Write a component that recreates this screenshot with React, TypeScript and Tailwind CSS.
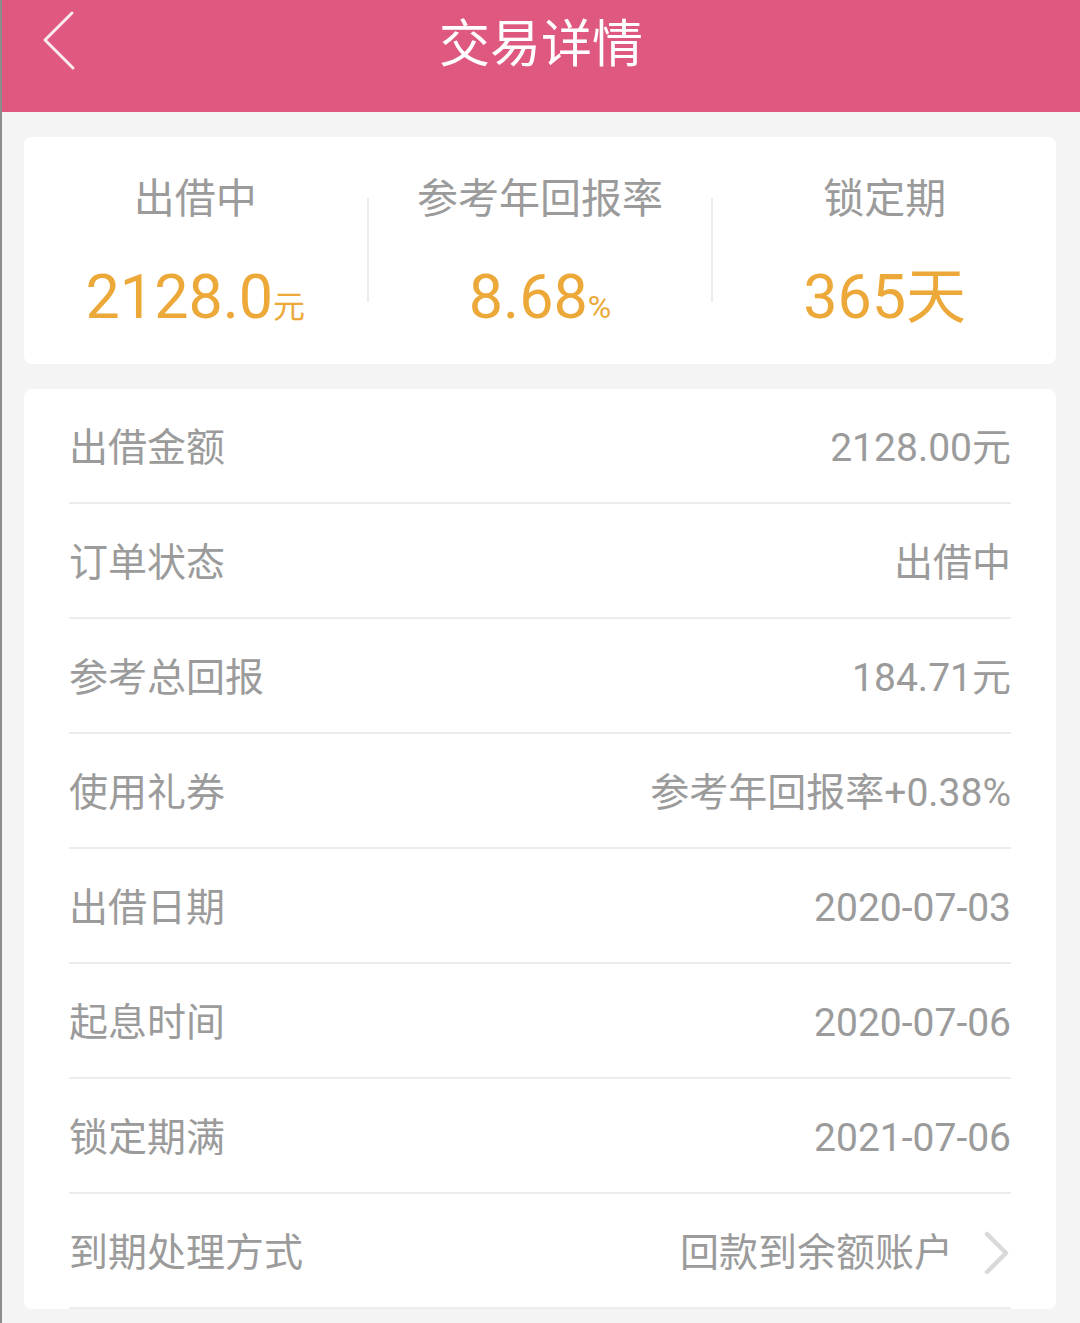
const SANS = "font-['Roboto','Noto_Sans_CJK_SC',sans-serif]";

type Row = { label: string; value: string; link?: boolean };

const ROWS: Row[] = [
  { label: "出借金额", value: "2128.00元" },
  { label: "订单状态", value: "出借中" },
  { label: "参考总回报", value: "184.71元" },
  { label: "使用礼券", value: "参考年回报率+0.38%" },
  { label: "出借日期", value: "2020-07-03" },
  { label: "起息时间", value: "2020-07-06" },
  { label: "锁定期满", value: "2021-07-06" },
  { label: "到期处理方式", value: "回款到余额账户", link: true },
];

function Stat({ label, value, unit, unitBig }: { label: string; value: string; unit: string; unitBig?: boolean }) {
  return (
    <div className="flex flex-1 flex-col items-center pt-[42px]">
      <div className="text-[41px] leading-[41px] text-[#9b9b9b]">{label}</div>
      <div className="mt-[47px] flex items-baseline text-[#eca939]">
        <span className="text-[61px] leading-[61px]">{value}</span>
        <span className={unitBig ? "text-[60px] leading-[61px]" : "text-[32px] leading-[32px]"}>{unit}</span>
      </div>
    </div>
  );
}

export default function App() {
  return (
    <div className={`${SANS} min-h-screen border-l-2 border-[#8c8c8c] bg-[#f4f4f4] pb-[15px]`}>
      {/* header */}
      <div className="relative flex h-[112px] items-start justify-center bg-[#de5880] pt-[14px]">
        <svg className="absolute left-[38px] top-[10px]" width="40" height="62" viewBox="0 0 40 62" fill="none">
          <polyline points="32,3 5,30 33,58" stroke="#fbeaf0" strokeWidth="3" strokeLinecap="round" strokeLinejoin="round" />
        </svg>
        <h1 className="text-[51px] leading-[62px] font-normal text-white">交易详情</h1>
      </div>

      {/* summary card */}
      <div className="ml-[22px] mr-[24px] mt-[25px] flex h-[227px] rounded-[8px] bg-white">
        <Stat label="出借中" value="2128.0" unit="元" />
        <div className="mt-[61px] h-[104px] w-[2px] bg-[#ececec]" />
        <Stat label="参考年回报率" value="8.68" unit="%" />
        <div className="mt-[61px] h-[104px] w-[2px] bg-[#ececec]" />
        <Stat label="锁定期" value="365" unit="天" unitBig />
      </div>

      {/* detail card */}
      <div className="ml-[22px] mr-[24px] mt-[25px] rounded-[8px] bg-white px-[45px]">
        {ROWS.map((r) => (
          <div key={r.label} className="flex h-[115px] items-center justify-between border-b-2 border-[#ececec] pt-[5px]">
            <span className="text-[39px] text-[#9b9b9b]">{r.label}</span>
            {r.link ? (
              <span className="flex items-center text-[39px] text-[#9b9b9b]">
                {r.value}
                <svg className="ml-[30px]" width="28" height="46" viewBox="0 0 28 46" fill="none">
                  <polyline points="4,4 23,23 4,42" stroke="#d9d9d9" strokeWidth="4.5" strokeLinecap="round" strokeLinejoin="round" />
                </svg>
              </span>
            ) : (
              <span className="text-[39px] text-[#9b9b9b]">{r.value}</span>
            )}
          </div>
        ))}
      </div>
    </div>
  );
}
